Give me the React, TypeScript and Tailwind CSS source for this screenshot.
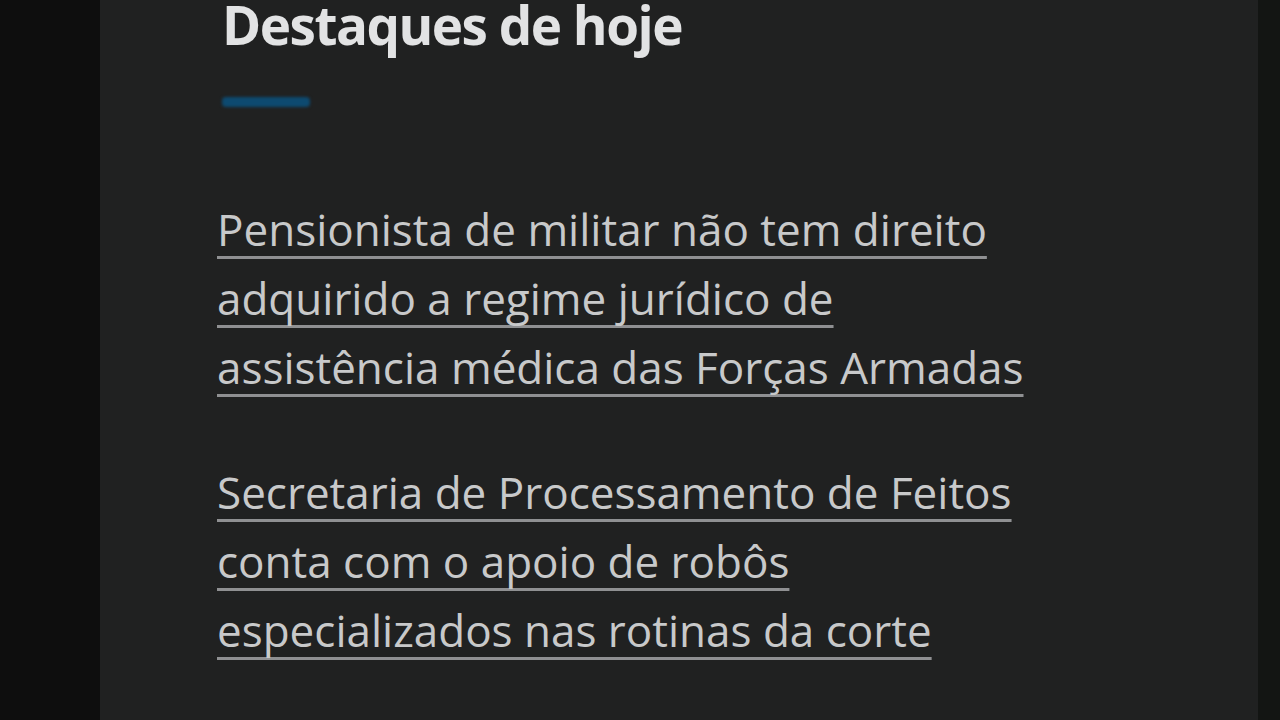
import React from "react";

const items = [
  ["Pensionista de militar não tem direito", "adquirido a regime jurídico de", "assistência médica das Forças Armadas"],
  ["Secretaria de Processamento de Feitos", "conta com o apoio de robôs", "especializados nas rotinas da corte"],
];

export default function App() {
  return (
    <div className="flex h-[720px] w-[1280px] overflow-hidden bg-[#202121]" style={{ fontFamily: '"Open Sans", "Noto Sans", sans-serif' }}>
      <div className="w-[100px] shrink-0 bg-[#0e0e0e]" />
      <div className="flex-1 bg-[#202121] pl-[122px]">
        <h2 className="pt-[1px] text-[53px] font-bold leading-[47px] tracking-[-1.5px] text-[#e2e3e4]">Destaques de hoje</h2>
        <div className="mt-[49px] h-[10px] w-[88px] rounded-sm bg-[#0d4a70] blur-[1.5px]" />
        <div className="ml-[-5px] mt-[88px] flex flex-col gap-[56px]">
          {items.map((lines, i) => (
            <a key={i} href="#" className="block text-[44px] leading-[69px] text-[#c8c9ca]">
              {lines.map((l, j) => (
                <span key={j} className="block">
                  <span className="underline decoration-[#8f9092] decoration-[3px] underline-offset-[10px] [text-decoration-skip-ink:none]">{l}</span>
                </span>
              ))}
            </a>
          ))}
        </div>
      </div>
      <div className="w-[22px] shrink-0 bg-[#131513]" />
    </div>
  );
}
